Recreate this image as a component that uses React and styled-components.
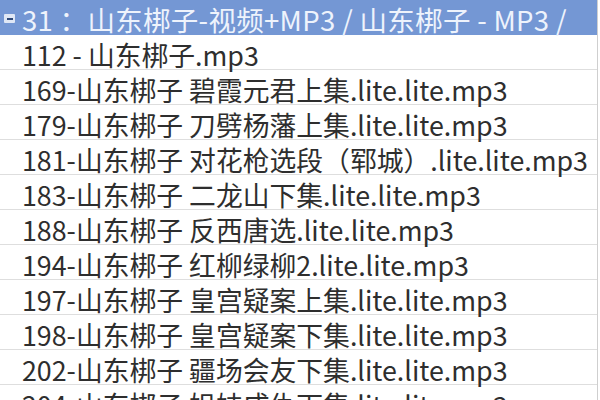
import React from 'react';
import styled, { createGlobalStyle } from 'styled-components';

const GlobalStyle = createGlobalStyle`
  html, body {
    margin: 0;
    padding: 0;
    background: #ffffff;
  }
  body {
    font-family: "Noto Sans CJK SC", "Open Sans", sans-serif;
  }
`;

const Panel = styled.div`
  width: 597px;
  height: 400px;
  overflow: hidden;
  border-right: 1px solid #cfcfcf;
  background: #fff;
`;

const Header = styled.div`
  display: flex;
  align-items: center;
  height: 35px;
  padding: 3px 0 0 4px;
  gap: 7px;
  background: #7497d4;
  color: #eef3fc;
  font-size: 27.5px;
  letter-spacing: 0.3px;
  line-height: 30px;
  white-space: nowrap;
  box-sizing: border-box;
`;

const Toggle = styled.span`
  display: inline-flex;
  align-items: center;
  justify-content: center;
  flex-shrink: 0;
  width: 11px;
  height: 9px;
  margin-top: -1px;
  background: #dfe7f5;
  border-radius: 1px;

  &::after {
    content: '';
    width: 6px;
    height: 2px;
    background: #2f4a7a;
  }
`;

const Row = styled.div`
  display: flex;
  align-items: center;
  height: 35px;
  padding: 5px 0 0 22px;
  border-bottom: 1px solid #dedede;
  box-sizing: border-box;
  color: #2e2e2e;
  font-size: 26.8px;
  line-height: 29px;
  white-space: nowrap;
`;

const files = [
  '112 - 山东梆子.mp3',
  '169-山东梆子 碧霞元君上集.lite.lite.mp3',
  '179-山东梆子 刀劈杨藩上集.lite.lite.mp3',
  '181-山东梆子 对花枪选段（郓城）.lite.lite.mp3',
  '183-山东梆子 二龙山下集.lite.lite.mp3',
  '188-山东梆子 反西唐选.lite.lite.mp3',
  '194-山东梆子 红柳绿柳2.lite.lite.mp3',
  '197-山东梆子 皇宫疑案上集.lite.lite.mp3',
  '198-山东梆子 皇宫疑案下集.lite.lite.mp3',
  '202-山东梆子 疆场会友下集.lite.lite.mp3',
  '204-山东梆子 姐妹成仇下集.lite.lite.mp3',
];

export default function App() {
  return (
    <>
      <GlobalStyle />
      <Panel>
        <Header>
          <Toggle />
          <span>31 ：山东梆子-视频+MP3 / 山东梆子 - MP3 /</span>
        </Header>
        {files.map((name) => (
          <Row key={name}>{name}</Row>
        ))}
      </Panel>
    </>
  );
}
